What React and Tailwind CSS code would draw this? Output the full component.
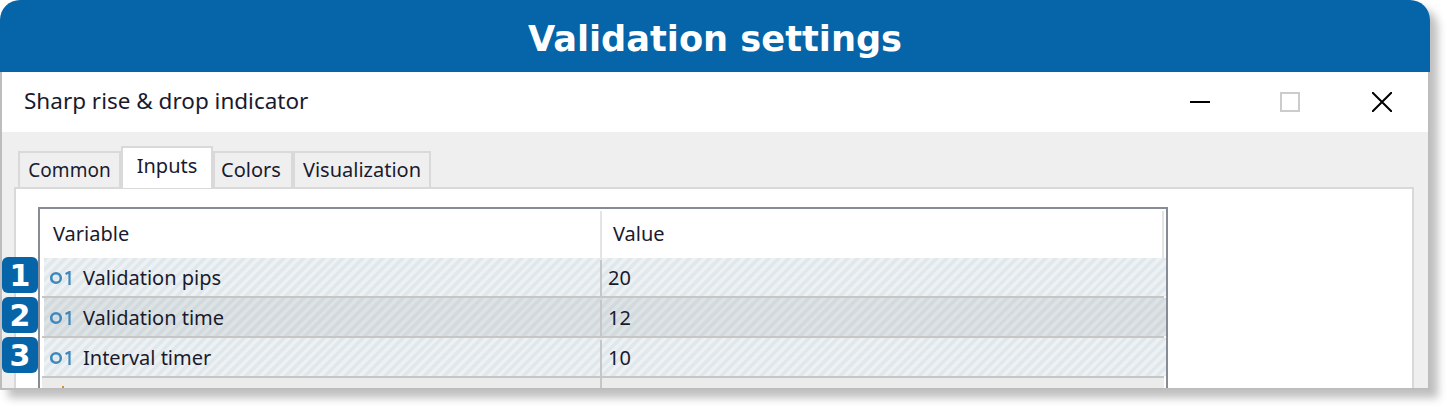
const stripes = 'bg-[repeating-linear-gradient(135deg,#e1e8eb_0,#e1e8eb_3.500px,#edf1f3_3.500px,#edf1f3_7px)]'
const stripesDark = 'bg-[repeating-linear-gradient(135deg,#d3dadd_0,#d3dadd_3.500px,#dde3e5_3.500px,#dde3e5_7px)]'

const tabs = [
  { label: 'Common', width: 'w-[103px] text-[19px]' },
  { label: 'Inputs', width: 'w-[92px]', active: true },
  { label: 'Colors', width: 'w-[80px] pr-1' },
  { label: 'Visualization', width: 'w-[138px]' },
]

const rows = [
  { n: 1, name: 'Validation pips', value: '20', bg: stripes },
  { n: 2, name: 'Validation time', value: '12', bg: stripesDark },
  { n: 3, name: 'Interval timer', value: '10', bg: stripes },
]

function NumIcon() {
  return (
    <svg width="22" height="14" viewBox="0 0 22 14" className="shrink-0">
      <circle cx="6" cy="7" r="4.800" fill="none" stroke="#3f88bd" strokeWidth="2.600" />
      <path d="M15.500 3L19.500 1V14" fill="none" stroke="#3f88bd" strokeWidth="2.200" />
    </svg>
  )
}

function Row({ n, name, value, bg }) {
  return (
    <div className="relative h-10 border-b-2 border-[#c6c6c6]">
      <div className="absolute left-[-40px] top-[-1px] z-10 flex h-9 w-9 items-center justify-center rounded-md bg-[#0565a8] font-['DejaVu_Sans'] text-[30px] font-bold text-white">
        {n}
      </div>
      <div className={`ml-[2px] mr-[-2px] flex h-[38px] pt-[2px] ${bg}`}>
        <div className="flex w-[558px] items-center gap-[11px] border-r-2 border-[#c6c6c6] pl-[6px]">
          <NumIcon />
          <span>{name}</span>
        </div>
        <div className="flex items-center pl-[6px]">{value}</div>
      </div>
    </div>
  )
}

export default function App() {
  return (
    <div className="h-[410px] w-[1450px] overflow-hidden bg-white font-['Noto_Sans',sans-serif] text-[20px] text-[#1a1a2e]">
      <div className="h-[390px] w-[1430px] rounded-t-[20px] shadow-[8px_8px_9px_rgba(0,0,0,0.25)]">
        <div className="flex h-[72px] items-center justify-center rounded-t-[20px] bg-[#0565a8] pt-[7px] font-['DejaVu_Sans',sans-serif] text-[35.200px] font-bold text-white">
          Validation settings
        </div>
        <div className="h-[318px] border-x-2 border-b-2 border-[#bdbdbd]">
          <div className="flex h-[60px] items-center justify-between bg-white pl-[22px] pr-[36px]">
            <span className="mb-[2px] text-[22.500px]">Sharp rise &amp; drop indicator</span>
            <div className="flex items-center gap-[70px]">
              <div className="h-[2px] w-5 bg-black" />
              <div className="h-5 w-5 border-2 border-[#cccccc]" />
              <svg width="20" height="20" viewBox="0 0 20 20" className="ml-[2px]">
                <path d="M0 0L20 20M20 0L0 20" stroke="#000" strokeWidth="2" />
              </svg>
            </div>
          </div>
          <div className="h-[256px] overflow-hidden bg-[#efefef] pl-3 pr-[14px] pt-[14px]">
            <div className="flex h-[41px] items-end pl-[4px]">
              {tabs.map((tab) => (
                <div
                  key={tab.label}
                  className={
                    tab.active
                      ? `relative z-10 mb-[-1px] flex h-[42px] items-center justify-center border-2 border-b-0 border-[#d9d9d9] bg-white pb-1 ${tab.width}`
                      : `flex h-9 items-center justify-center border-2 border-b-0 border-[#d9d9d9] ${tab.width}`
                  }
                >
                  {tab.label}
                </div>
              ))}
            </div>
            <div className="h-[210px] border-2 border-[#d9d9d9] bg-white pl-[22px] pt-[18px]">
              <div className="h-[192px] w-[1130px] border-2 border-b-0 border-[#868b96] px-[2px]">
                <div className="flex h-[49px] pt-[2px]">
                  <div className="flex w-[560px] items-center border-r-2 border-[#e4e4e4] pb-[2px] pl-[11px]">Variable</div>
                  <div className="flex flex-1 items-center border-r-2 border-[#e4e4e4] pb-[2px] pl-[11px]">Value</div>
                </div>
                {rows.map((row) => (
                  <Row key={row.n} {...row} />
                ))}
                <div className="relative h-3 bg-[#ebebeb]">
                  <div className="absolute left-[20px] top-[8px] h-[2px] w-[2px] bg-[#e08a2c]" />
                  <div className="ml-[558px] h-full w-[2px] bg-[#c6c6c6]" />
                </div>
              </div>
            </div>
          </div>
        </div>
      </div>
    </div>
  )
}
